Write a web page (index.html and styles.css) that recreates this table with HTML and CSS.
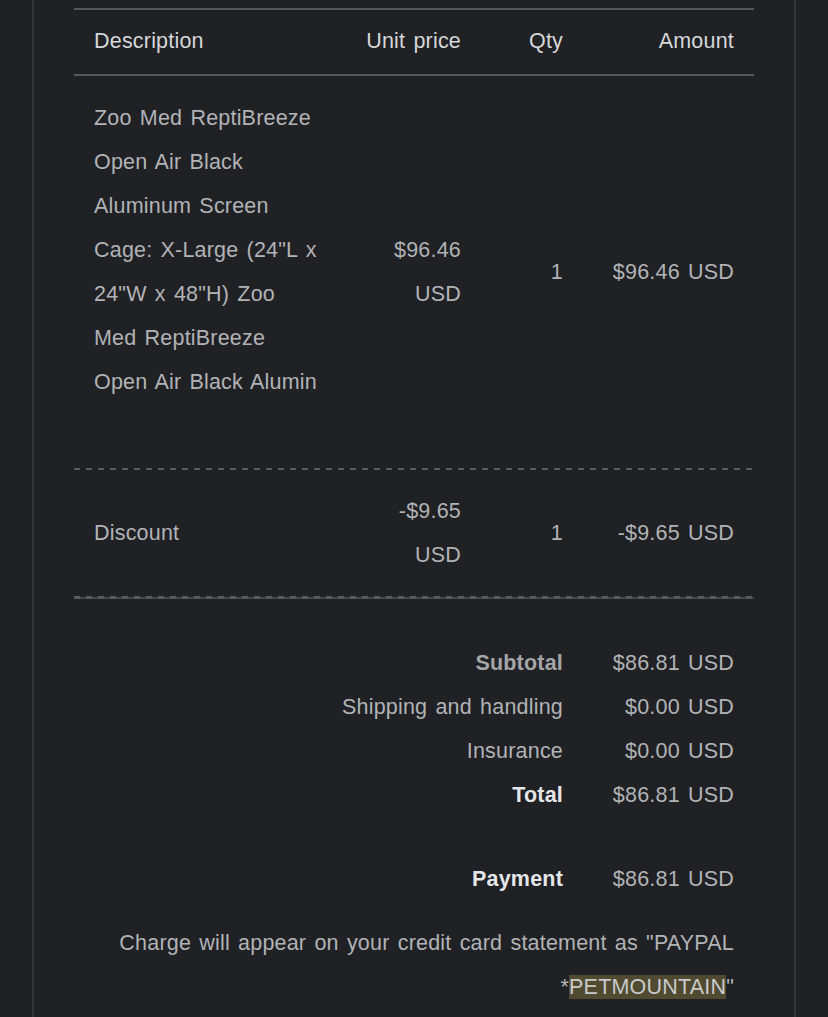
FILE: index.html
```html
<!DOCTYPE html>
<html>
<head>
<meta charset="utf-8">
<link rel="stylesheet" href="styles.css">
</head>
<body>
<div class="page">
  <div class="card">
    <table class="items">
      <colgroup>
        <col class="c-desc">
        <col class="c-unit">
        <col class="c-qty">
        <col class="c-amt">
      </colgroup>
      <thead>
        <tr class="head">
          <th class="left">Description</th>
          <th>Unit price</th>
          <th>Qty</th>
          <th>Amount</th>
        </tr>
      </thead>
      <tbody>
        <tr class="item">
          <td class="left desc">Zoo Med ReptiBreeze Open Air Black Aluminum Screen Cage: X-Large (24"L x 24"W x 48"H) Zoo Med ReptiBreeze Open Air Black Alumin</td>
          <td>$96.46 USD</td>
          <td>1</td>
          <td>$96.46 USD</td>
        </tr>
        <tr class="sep"><td colspan="4"><div class="dash"></div></td></tr>
        <tr class="item discount">
          <td class="left">Discount</td>
          <td>-$9.65 USD</td>
          <td>1</td>
          <td>-$9.65 USD</td>
        </tr>
        <tr class="sep"><td colspan="4"><div class="dash"></div><div class="solid"></div></td></tr>
      </tbody>
    </table>

    <div class="summary">
      <div class="lbl strong-dim">Subtotal</div><div class="val">$86.81 USD</div>
      <div class="lbl">Shipping and handling</div><div class="val">$0.00 USD</div>
      <div class="lbl">Insurance</div><div class="val">$0.00 USD</div>
      <div class="lbl strong">Total</div><div class="val">$86.81 USD</div>
    </div>

    <div class="summary payment">
      <div class="lbl strong">Payment</div><div class="val">$86.81 USD</div>
    </div>

    <p class="note">Charge will appear on your credit card statement as "PAYPAL *<span class="hl">PETMOUNTAIN</span>"</p>
  </div>
</div>
</body>
</html>
```

FILE: styles.css
```css
html, body {
  margin: 0;
  padding: 0;
  background: #202124;
}

body {
  font-family: "Liberation Sans", Arial, Helvetica, sans-serif;
  font-size: 21.5px;
  letter-spacing: 0.2px;
  word-spacing: 2px;
  color: #b1b3b6;
}

.page {
  padding-left: 32px;
  width: 764px;
}

.card {
  border-left: 2px solid #35363a;
  border-right: 2px solid #35363a;
  padding: 8px 40px 20px 40px;
  min-height: 1017px;
  box-sizing: border-box;
}

.items {
  width: 680px;
  border-collapse: collapse;
  table-layout: fixed;
}

.c-desc { width: 267px; }
.c-unit { width: 140px; }
.c-qty { width: 102px; }
.c-amt { width: 171px; }

.items th,
.items td {
  padding: 0 20px;
  text-align: right;
  font-weight: normal;
  line-height: 44px;
  vertical-align: middle;
}

.items .left { text-align: left; }

.head th {
  color: #d5d7da;
  height: 66px;
  padding-bottom: 3px;
  border-top: 2px solid #54565a;
  border-bottom: 2px solid #54565a;
  box-sizing: border-box;
}

.item td {
  padding-top: 20px;
  padding-bottom: 20px;
}

.item td.desc {
  padding-bottom: 64px;
}

.discount td {
  padding-top: 19px;
  padding-bottom: 19px;
}

.sep td {
  padding: 0;
  line-height: 0;
  height: auto;
}

.dash {
  height: 2px;
  background: repeating-linear-gradient(to right, #5a5c60 0 6px, transparent 6px 12px);
}

.solid {
  height: 2px;
  margin-top: -1px;
  background: repeating-linear-gradient(to right, #56585c 0 6px, #44464a 6px 12px);
}

.summary {
  display: grid;
  grid-template-columns: 1fr 171px;
  width: 680px;
  margin-top: 42px;
  line-height: 44px;
}

.summary .lbl,
.summary .val {
  text-align: right;
  padding-right: 20px;
}

.summary .strong-dim {
  font-weight: bold;
  color: #a3a5a8;
}

.summary .strong {
  font-weight: bold;
  color: #e4e6e9;
}

.payment {
  margin-top: 40px;
}

.note {
  margin: 20px 0 0 0;
  width: 680px;
  box-sizing: border-box;
  padding: 0 20px;
  text-align: right;
  line-height: 44px;
}

.hl {
  background: #4f4a30;
  color: #c9cacb;
}
```
